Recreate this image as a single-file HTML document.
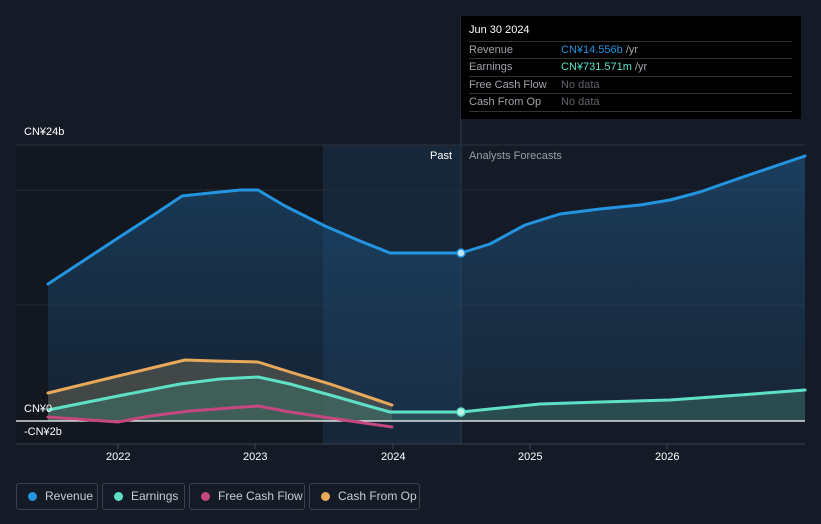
<!DOCTYPE html>
<html><head><meta charset="utf-8"><style>
body{margin:0;background:#151b26;font-family:"Liberation Sans",sans-serif;width:821px;height:524px;overflow:hidden;position:relative}
.t{position:absolute;font-size:11px;color:#fff}
.leg{position:absolute;top:483px;height:27px;border:1px solid #3a414d;border-radius:3px;box-sizing:border-box;color:#c9ccd1;font-size:12px;line-height:25px;padding-left:28px}
.leg i{position:absolute;left:11px;top:8px;width:9px;height:9px;border-radius:50%}
.tt{position:absolute;left:461px;top:16px;width:340px;height:103px;background:#000}
.tt div{position:absolute;left:8px;width:323px;font-size:11px;color:#a0a4ab;border-top:1px solid #333;height:17px;line-height:17px}
</style></head><body>
<svg width="821" height="524" style="position:absolute;left:0;top:0">
<defs><linearGradient id="g" x1="0" y1="0" x2="0" y2="1"><stop offset="0" stop-color="#1e5b8c" stop-opacity=".55"/><stop offset="1" stop-color="#1e4060" stop-opacity=".3"/></linearGradient></defs>
<rect x="16" y="145" width="307" height="299" fill="#121720"/>
<rect x="323" y="145" width="138" height="299" fill="#17273a"/>
<line x1="461" y1="16" x2="461" y2="444" stroke="#2a3a4d"/>
<line x1="16" y1="145" x2="805" y2="145" stroke="#2d333d"/>
<line x1="16" y1="190" x2="805" y2="190" stroke="#252b35"/>
<line x1="16" y1="305" x2="805" y2="305" stroke="#252b35"/>
<line x1="16" y1="444" x2="805" y2="444" stroke="#3a414d"/>
<path d="M48,284 L118,238 155,214 182,196 210,193 240,190 258,190 285,206 325,226 360,241 390,253 420,253 461,253 490,244 525,225 560,214 600,209 640,205 670,200 700,192 740,178 805,156 L805,421 L48,421Z" fill="url(#g)"/>
<path d="M48,393 L118,376 160,366 185,360 215,361 258,362 290,372 330,384 392,405 L392,421 48,421Z" fill="#6b6a55" opacity=".5"/>
<path d="M48,410 L118,396 180,384 220,379 258,377 290,384 330,395 365,405 390,412 461,412 500,408 540,404 600,402 670,400 740,395 805,390 L805,421 48,421Z" fill="#3f7a6e" opacity=".45"/>
<line x1="16" y1="421" x2="805" y2="421" stroke="#fff" stroke-width="1.2"/>
<g fill="none" stroke-width="3" stroke-linejoin="round" stroke-linecap="round">
<path d="M48,284 L118,238 155,214 182,196 210,193 240,190 258,190 285,206 325,226 360,241 390,253 420,253 461,253 490,244 525,225 560,214 600,209 640,205 670,200 700,192 740,178 805,156" stroke="#2394df"/>
<path d="M48,393 L118,376 160,366 185,360 215,361 258,362 290,372 330,384 392,405" stroke="#e8a95a"/>
<path d="M48,417 L118,422 150,416 190,411 230,408 258,406 290,412 330,418 392,427" stroke="#c4487f"/>
<path d="M48,410 L118,396 180,384 220,379 258,377 290,384 330,395 365,405 390,412 461,412 500,408 540,404 600,402 670,400 740,395 805,390" stroke="#5ee0c7"/>
</g>
<circle cx="461" cy="253" r="4" fill="#bfe3f7" stroke="#2394df" stroke-width="1.5"/>
<circle cx="461" cy="412" r="4" fill="#bff3e8" stroke="#5ee0c7" stroke-width="1.5"/>
<g stroke="#3a414d"><line x1="118" y1="444" x2="118" y2="449"/><line x1="255" y1="444" x2="255" y2="449"/><line x1="393" y1="444" x2="393" y2="449"/><line x1="530" y1="444" x2="530" y2="449"/><line x1="667" y1="444" x2="667" y2="449"/></g>
</svg>
<div class="t" style="left:24px;top:126px">CN¥24b</div>
<div class="t" style="left:24px;top:403px">CN¥0</div>
<div class="t" style="left:24px;top:426px">-CN¥2b</div>
<div class="t" style="left:430px;top:150px">Past</div>
<div class="t" style="left:469px;top:150px;color:#9a9fa6">Analysts Forecasts</div>
<div class="t" style="left:106px;top:451px">2022</div>
<div class="t" style="left:243px;top:451px">2023</div>
<div class="t" style="left:381px;top:451px">2024</div>
<div class="t" style="left:518px;top:451px">2025</div>
<div class="t" style="left:655px;top:451px">2026</div>
<div class="tt">
<span style="position:absolute;left:8px;top:8px;color:#fff;font-size:11px">Jun 30 2024</span>
<div style="top:25px">Revenue<span style="position:absolute;left:92px;color:#2394df">CN¥14.556b <span style="color:#a0a4ab">/yr</span></span></div>
<div style="top:42px">Earnings<span style="position:absolute;left:92px;color:#5ee0c7">CN¥731.571m <span style="color:#a0a4ab">/yr</span></span></div>
<div style="top:60px">Free Cash Flow<span style="position:absolute;left:92px;color:#5f636a">No data</span></div>
<div style="top:77px;border-bottom:1px solid #333">Cash From Op<span style="position:absolute;left:92px;color:#5f636a">No data</span></div>
</div>
<div class="leg" style="left:16px;width:82px"><i style="background:#2394df"></i>Revenue</div>
<div class="leg" style="left:102px;width:83px"><i style="background:#5ee0c7"></i>Earnings</div>
<div class="leg" style="left:189px;width:116px"><i style="background:#c4487f"></i>Free Cash Flow</div>
<div class="leg" style="left:309px;width:111px"><i style="background:#e8a95a"></i>Cash From Op</div>
</body></html>
